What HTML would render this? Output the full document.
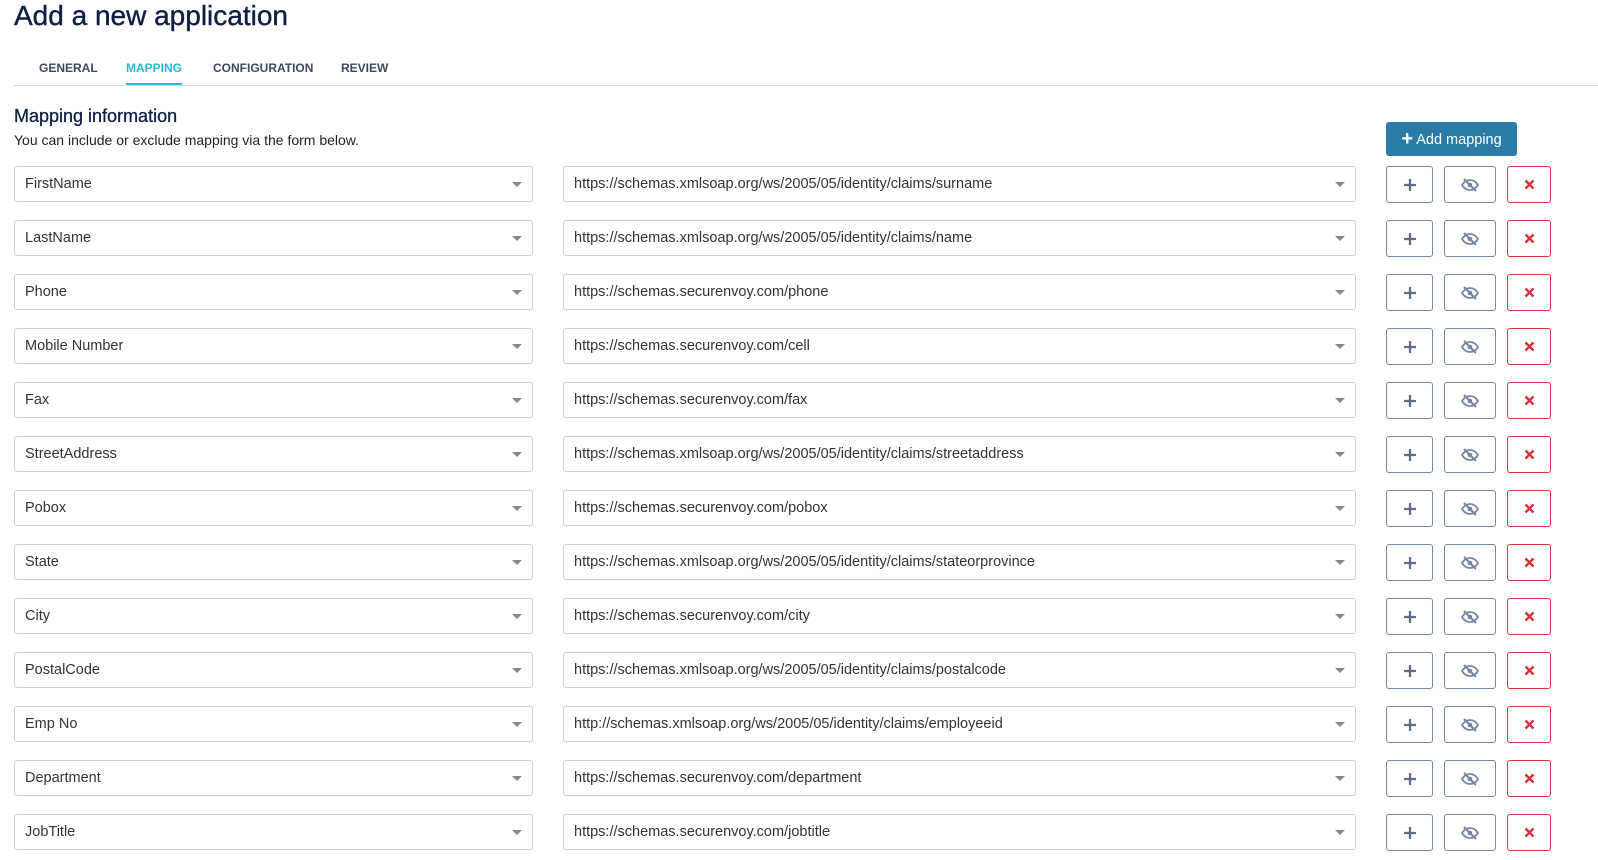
<!DOCTYPE html>
<html><head><meta charset="utf-8"><style>
body{margin:0;background:#fff;font-family:"Liberation Sans",sans-serif;width:1598px;height:860px;overflow:hidden;position:relative;color:#222}
h1{position:absolute;left:14px;top:0px;margin:0;font-size:28px;font-weight:normal;color:#0f1f44;-webkit-text-stroke:0.4px #0f1f44}
.tabs{position:absolute;left:14px;top:58px;width:1584px;height:27px;border-bottom:1px solid #d6d9de}
.tab{position:absolute;top:3px;font-size:12px;font-weight:bold;color:#3d4a5c}
.tab.a{color:#27b8d8;border-bottom:2px solid #27b8d8;height:22px}
h2{position:absolute;left:14px;top:106px;margin:0;font-size:18px;font-weight:normal;color:#0f1f44;-webkit-text-stroke:0.3px #0f1f44}
.sub{position:absolute;left:14px;top:132px;font-size:14px;color:#222}
.add{position:absolute;left:1386px;top:122px;width:131px;height:34px;background:#2a7ba6;border-radius:3px;color:#fff;font-size:14.5px;line-height:34px;text-align:center}
.sel{position:absolute;height:36px;border:1px solid #d0d0d0;border-radius:3px;box-sizing:border-box;font-size:14.5px;line-height:34px;padding-left:10px;color:#333}
.sel:after{content:"";position:absolute;right:10px;top:15px;border-left:5px solid transparent;border-right:5px solid transparent;border-top:5px solid #888}
.b{position:absolute;height:37px;border:1px solid #7586a3;border-radius:3px;box-sizing:border-box;display:flex;align-items:center;justify-content:center}
.b.x{border-color:#e0303c}
</style></head><body>
<h1>Add a new application</h1>
<div class="tabs">
<span class="tab" style="left:25px">GENERAL</span>
<span class="tab a" style="left:112px">MAPPING</span>
<span class="tab" style="left:199px">CONFIGURATION</span>
<span class="tab" style="left:327px">REVIEW</span>
</div>
<h2>Mapping information</h2>
<div class="sub">You can include or exclude mapping via the form below.</div>
<div class="add"><b style="font-size:20px;vertical-align:-1px">+</b> Add mapping</div>
<div id="rows"></div>
<script>
var d=[["FirstName","https://schemas.xmlsoap.org/ws/2005/05/identity/claims/surname"],["LastName","https://schemas.xmlsoap.org/ws/2005/05/identity/claims/name"],["Phone","https://schemas.securenvoy.com/phone"],["Mobile Number","https://schemas.securenvoy.com/cell"],["Fax","https://schemas.securenvoy.com/fax"],["StreetAddress","https://schemas.xmlsoap.org/ws/2005/05/identity/claims/streetaddress"],["Pobox","https://schemas.securenvoy.com/pobox"],["State","https://schemas.xmlsoap.org/ws/2005/05/identity/claims/stateorprovince"],["City","https://schemas.securenvoy.com/city"],["PostalCode","https://schemas.xmlsoap.org/ws/2005/05/identity/claims/postalcode"],["Emp No","http://schemas.xmlsoap.org/ws/2005/05/identity/claims/employeeid"],["Department","https://schemas.securenvoy.com/department"],["JobTitle","https://schemas.securenvoy.com/jobtitle"]];
var h="";
var plus='<svg width="14" height="14" viewBox="0 0 14 14"><path d="M7 1v12M1 7h12" stroke="#5c6b86" stroke-width="2.2"/></svg>';
var eye='<svg width="18" height="14" viewBox="0 0 18 14"><path d="M1 7C3.5 3 6 2 9 2s5.5 1 8 5c-2.5 4-5 5-8 5S3.5 11 1 7z" fill="none" stroke="#7586a3" stroke-width="1.8"/><circle cx="9" cy="7" r="2.3" fill="#7586a3"/><path d="M3 1l12 12" stroke="#7586a3" stroke-width="2"/></svg>';
var x='<svg width="11" height="11" viewBox="0 0 11 11"><path d="M1.5 1.5l8 8M9.5 1.5l-8 8" stroke="#e0303c" stroke-width="2.4"/></svg>';
d.forEach(function(r,i){var t=166+54*i;
h+='<div class="sel" style="left:14px;top:'+t+'px;width:519px">'+r[0]+'</div>';
h+='<div class="sel" style="left:563px;top:'+t+'px;width:793px">'+r[1]+'</div>';
h+='<div class="b" style="left:1386px;top:'+t+'px;width:47px">'+plus+'</div>';
h+='<div class="b" style="left:1444px;top:'+t+'px;width:52px">'+eye+'</div>';
h+='<div class="b x" style="left:1507px;top:'+t+'px;width:44px">'+x+'</div>';});
document.getElementById("rows").innerHTML=h;
</script>
</body></html>
